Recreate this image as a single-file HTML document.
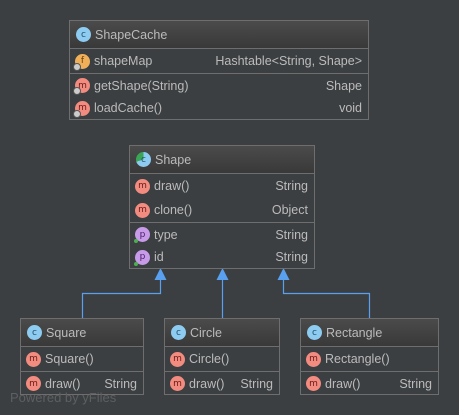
<!DOCTYPE html>
<html><head><style>
*{margin:0;padding:0;box-sizing:border-box}
body{width:459px;height:415px;background:#3c3f41;position:relative;overflow:hidden;font-family:"Liberation Sans","DejaVu Sans",sans-serif;font-size:12.5px;color:#bbbbbb}
.box{position:absolute;border:1px solid #6e6e6e;background:#3c3f41}
.hd{height:28px;background:linear-gradient(#4b4b4b,#393939);border-bottom:1px solid #6e6e6e;display:flex;align-items:center;padding-left:6px}
.row{height:24px;display:flex;align-items:center;padding:0 6px 0 5px;position:relative}
.row .t{margin-left:auto}
.sep{border-top:1px solid #6e6e6e}
.ic{width:15px;height:15px;border-radius:50%;display:inline-flex;align-items:center;justify-content:center;font-size:9px;margin-right:4px;position:relative;flex:none;font-family:"DejaVu Sans",sans-serif}
.c{background:#8ecbf0;color:#1f4e6a}
.m{background:#f28b80;color:#6a1d17}
.f{background:#f0b05a;color:#6a3d0a}
.p{background:#c79be8;color:#4a1c6a}
.lock::after{content:"";position:absolute;left:-2px;bottom:-2px;width:6px;height:6px;border-radius:50%;background:#ccc;border:1px solid #555}
.g::after{content:"";position:absolute;left:-1px;bottom:-1px;width:4px;height:4px;border-radius:50%;background:#4caf50}
.pb{position:absolute;left:10px;top:390px;color:#5d5f61;font-size:13px}
</style></head><body>
<svg width="459" height="415" style="position:absolute;left:0;top:0">
<g stroke="#5aa0f0" stroke-width="1.2" fill="none">
<polyline points="82.5,318 82.5,293.5 160.5,293.5 160.5,278"/>
<polyline points="222.5,318 222.5,278"/>
<polyline points="369.5,318 369.5,293.5 283.5,293.5 283.5,278"/>
</g>
<g fill="#5aa0f0">
<polygon points="160.5,268 154.5,280 166.5,280"/>
<polygon points="222.5,268 216.5,280 228.5,280"/>
<polygon points="283.5,268 277.5,280 289.5,280"/>
</g>
</svg>
<div class="box" style="left:69px;top:20px;width:300px;height:100px">
<div class="hd"><span class="ic c">c</span>ShapeCache</div>
<div class="row"><span class="ic f lock">f</span>shapeMap<span class="t">Hashtable&lt;String, Shape&gt;</span></div>
<div class="row sep" style="height:24px"><span class="ic m lock">m</span>getShape(String)<span class="t">Shape</span></div>
<div class="row" style="height:22px"><span class="ic m lock">m</span>loadCache()<span class="t">void</span></div>
</div>
<div class="box" style="left:129px;top:145px;width:186px;height:124px">
<div class="hd"><span class="ic c" style="background:conic-gradient(#8ecbf0 0 70%,#3aa655 70%)">c</span>Shape</div>
<div class="row"><span class="ic m">m</span>draw()<span class="t">String</span></div>
<div class="row"><span class="ic m">m</span>clone()<span class="t">Object</span></div>
<div class="row sep"><span class="ic p g">p</span>type<span class="t">String</span></div>
<div class="row" style="height:22px"><span class="ic p g">p</span>id<span class="t">String</span></div>
</div>
<div class="box" style="left:20px;top:318px;width:124px;height:77px">
<div class="hd"><span class="ic c">c</span>Square</div>
<div class="row"><span class="ic m">m</span>Square()</div>
<div class="row sep"><span class="ic m">m</span>draw()<span class="t">String</span></div>
</div>
<div class="box" style="left:164px;top:318px;width:116px;height:77px">
<div class="hd"><span class="ic c">c</span>Circle</div>
<div class="row"><span class="ic m">m</span>Circle()</div>
<div class="row sep"><span class="ic m">m</span>draw()<span class="t">String</span></div>
</div>
<div class="box" style="left:300px;top:318px;width:139px;height:77px">
<div class="hd"><span class="ic c">c</span>Rectangle</div>
<div class="row"><span class="ic m">m</span>Rectangle()</div>
<div class="row sep"><span class="ic m">m</span>draw()<span class="t">String</span></div>
</div>
<div class="pb">Powered by yFiles</div>
</body></html>
